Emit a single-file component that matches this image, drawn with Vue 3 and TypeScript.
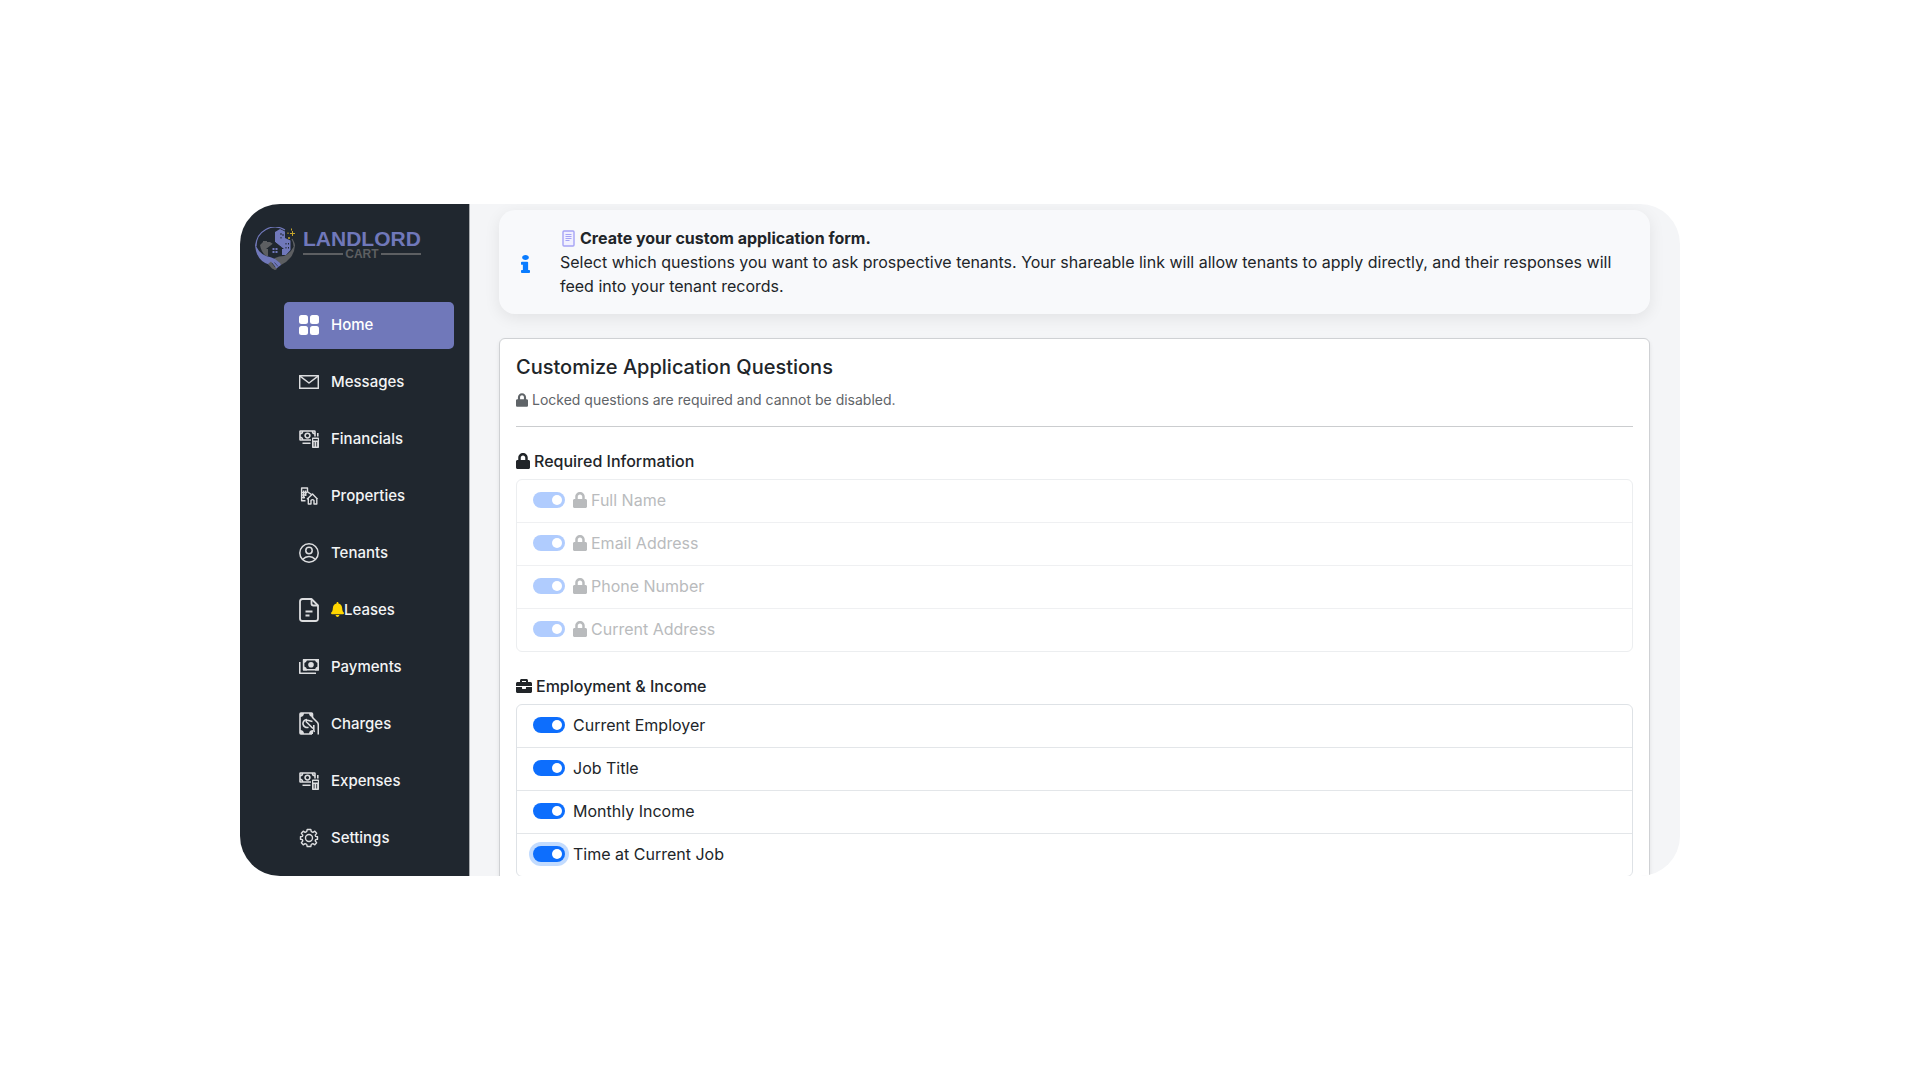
<script setup lang="ts">
import { ref } from 'vue'

interface Glyph {
  width: number
  height: number
  strokes?: string[]
  fills?: string[]
  weight?: number
}

interface NavItem {
  label: string
  icon: Glyph
  active?: boolean
  alert?: boolean
}

interface Question {
  id: string
  label: string
  enabled: boolean
  focused?: boolean
}

const money: Glyph = {
  width: 20,
  height: 18,
  weight: 1.6,
  strokes: [
    'M12 10H1.6C1.2 10 1 9.800 1 9.400V1.600C1 1.200 1.200 1 1.600 1H15.400C15.800 1 16 1.200 16 1.600V6.500',
    'M8.500 3.200A2.400 2.400 0 1 1 8.500 8A2.400 2.400 0 1 1 8.500 3.200Z',
    'M1 3.800C2.600 3.800 3.600 2.700 3.600 1M1 7.200C2.600 7.200 3.600 8.300 3.600 10M16 3.800C14.400 3.800 13.400 2.700 13.400 1',
    'M3.500 13.200H11.500M18.800 3V6.500',
  ],
  fills: [
    'M13.700 7.500H19.300Q20 7.500 20 8.200V17.300Q20 18 19.300 18H13.700Q13 18 13 17.300V8.200Q13 7.500 13.700 7.500ZM14.200 8.900V10.400H18.800V8.900ZM14.700 12V16.500H15.500V12ZM17.300 12V16.500H18.100V12Z',
  ],
}

const nav: NavItem[] = [
  {
    label: 'Home',
    active: true,
    icon: {
      width: 20,
      height: 20,
      fills: [
        'M2.500 0H6.500Q9 0 9 2.500V6.500Q9 9 6.500 9H2.500Q0 9 0 6.500V2.500Q0 0 2.500 0Z',
        'M13.500 0H17.500Q20 0 20 2.500V6.500Q20 9 17.500 9H13.500Q11 9 11 6.500V2.500Q11 0 13.500 0Z',
        'M2.500 11H6.500Q9 11 9 13.500V17.500Q9 20 6.500 20H2.500Q0 20 0 17.500V13.500Q0 11 2.500 11Z',
        'M13.500 11H17.500Q20 11 20 13.500V17.500Q20 20 17.500 20H13.500Q11 20 11 17.500V13.500Q11 11 13.500 11Z',
      ],
    },
  },
  {
    label: 'Messages',
    icon: { width: 20, height: 14, weight: 1.5, strokes: ['M.7.7H19.300V13.300H.7Z', 'M1 1.200L10 8L19 1.200'] },
  },
  { label: 'Financials', icon: money },
  {
    label: 'Properties',
    icon: {
      width: 20,
      height: 18,
      weight: 1.4,
      strokes: [
        'M6.500 13.700H2.600V1H8.500V4.800L12.500 7.500',
        'M4.700 3.500V11.500M6.700 3.500V9M3 5.500H8M3 8H7.500M3 10.500H6',
        'M8 12.300L13.500 7L18.600 12.300M9.300 11.500V17H12V13.500Q13.500 11.800 15 13.500V17H17.800V11.500',
      ],
    },
  },
  {
    label: 'Tenants',
    icon: {
      width: 20,
      height: 20,
      weight: 1.5,
      strokes: [
        'M10 .8A9.200 9.200 0 1 1 10 19.200A9.200 9.200 0 1 1 10 .8Z',
        'M10 4.300A3.200 3.200 0 1 1 10 10.700A3.200 3.200 0 1 1 10 4.300Z',
        'M3.800 16.200Q6.300 13.400 10 13.400T16.200 16.200',
      ],
    },
  },
  {
    label: 'Leases',
    alert: true,
    icon: {
      width: 20,
      height: 24,
      weight: 1.8,
      strokes: [
        'M12.500 1H3.500Q1 1 1 3.500V20.500Q1 23 3.500 23H16.500Q19 23 19 20.500V7.500Z',
        'M12.500 1V5.500Q12.500 7.500 14.500 7.500H19',
        'M6.500 13.500H13.500M6.500 17.500H10.500',
      ],
    },
  },
  {
    label: 'Payments',
    icon: {
      width: 20,
      height: 15,
      weight: 1.6,
      strokes: ['M.8 3V14.200H17', 'M4.600.8H19.200V10.700H4.600Z'],
      fills: [
        'M12 3A2.800 2.800 0 1 1 12 8.600A2.800 2.800 0 1 1 12 3Z',
        'M4 0H8Q8 4 4 4ZM20 0H16Q16 4 20 4ZM4 11.500H8Q8 7.500 4 7.500ZM20 11.500H16Q16 7.500 20 7.500Z',
      ],
    },
  },
  {
    label: 'Charges',
    icon: {
      width: 20,
      height: 23,
      weight: 1.6,
      strokes: [
        'M13 22H2Q1 22 1 21V2Q1 1 2 1H12.500Q13.500 1 13.500 2V6',
        'M8 7.500A4 4 0 1 0 9.500 15.200M13.500 5.500L18.500 10.500Q19.300 11.500 19.300 13V22.500',
        'M13.500 9.500L8.500 8.200Q6.500 8.200 7.500 10L14 16.500M14.800 13V17.500Q14.800 19 15.500 20',
      ],
      fills: [
        'M1 1H5Q5 5 1 5ZM14 1H10Q10 5 14 5ZM1 22H5Q5 18 1 18ZM14 22H10Q10 18 14 18Z',
      ],
    },
  },
  { label: 'Expenses', icon: money },
  {
    label: 'Settings',
    icon: {
      width: 20,
      height: 20,
      weight: 1.4,
      strokes: [
        'M8.200 1.500H11.800L12.300 3.700L13.900 4.400L15.800 3.200L17.600 5.300L16.200 7.200L16.700 8.400L18.500 8.800V11.200L16.700 11.600L16.200 12.800L17.600 14.700L15.800 16.800L13.900 15.600L12.300 16.300L11.800 18.500H8.200L7.700 16.300L6.100 15.600L4.200 16.800L2.400 14.700L3.800 12.800L3.300 11.600L1.500 11.200V8.800L3.300 8.400L3.800 7.200L2.400 5.300L4.200 3.200L6.100 4.400L7.700 3.700Z',
        'M10 6.500A3.500 3.500 0 1 1 10 13.500A3.500 3.500 0 1 1 10 6.500Z',
      ],
    },
  },
]

const required: Question[] = [
  { id: 'full-name', label: 'Full Name', enabled: true },
  { id: 'email', label: 'Email Address', enabled: true },
  { id: 'phone', label: 'Phone Number', enabled: true },
  { id: 'address', label: 'Current Address', enabled: true },
]

const employment = ref<Question[]>([
  { id: 'employer', label: 'Current Employer', enabled: true },
  { id: 'job-title', label: 'Job Title', enabled: true },
  { id: 'income', label: 'Monthly Income', enabled: true },
  { id: 'job-time', label: 'Time at Current Job', enabled: true, focused: true },
])

const lockPath =
  'M400 224h-24v-72C376 68.200 307.800 0 224 0S72 68.200 72 152v72H48c-26.500 0-48 21.500-48 48v192c0 26.500 21.500 48 48 48h352c26.500 0 48-21.500 48-48V272c0-26.500-21.500-48-48-48zm-104 0H152v-72c0-39.700 32.300-72 72-72s72 32.300 72 72v72z'
</script>

<template>
  <div class="page">
    <div class="frame">
      <aside class="sidebar">
        <a class="brand" href="#" aria-label="Landlord Cart">
          <svg class="brand-mark" viewBox="0 0 40 43" width="40" height="43" aria-hidden="true">
            <path d="M1 19A19 19 0 0 1 30 3" fill="none" stroke="#7078ba" stroke-width="1.200" />
            <path d="M37 12Q39 15 39.200 19" fill="none" stroke="#5d5f62" stroke-width="1.200" />
            <path d="M20 5L25 2L30 4.500V11L35.500 13.500V23L31 28H26V20L20 15Z" fill="#7078ba" />
            <path d="M26 6v2M28 7v2M26 10v1.500M31 16v1.500M33.500 16v1.500M31 20v1.500M33.500 20v1.500" stroke="#20272f" stroke-width="1" />
            <path d="M5 18L8 15V14H12V15H15L18 17L14 22V29H11Q6 25 5 18Z" fill="#5d5f62" />
            <path d="M20 15L29 22H27V30H13V22H11Z" fill="#20272f" />
            <path d="M17.500 21h2v2h-2zM20.500 21h2v2h-2zM17.500 24h2v2h-2zM20.500 24h2v2h-2z" fill="#7078ba" />
            <path d="M40 15Q40.500 24 36 30Q32 35 26 38L22 35L17 34L20 31Q24 29 29 29Q38 25 40 15Z" fill="#5d5f62" />
            <path d="M0 15Q2 25 11 29Q16 30 20 32L25 36L26 38L20 42.500L15 38Q4 35 1 24Q0 20 0 15Z" fill="#7078ba" />
            <path d="M13 37L16 34.500L22 42L20 43L17 41.500Z" fill="#5d5f62" />
            <path d="M17 36L20 40M19.500 35.500L23 39.500" stroke="#20272f" stroke-width=".6" />
            <path d="M37.500 4v5M35 6.500h5M34 10v2M33 11h2M36.500 1.500v2M33 5.500v1.500" stroke="#c5a52c" stroke-width="1" />
          </svg>
          <span class="brand-text">
            <span class="brand-name">LANDLORD</span>
            <span class="brand-sub">CART</span>
          </span>
        </a>
        <nav class="nav" aria-label="Main">
          <a v-for="item in nav" :key="item.label" href="#" class="nav-link" :class="{ active: item.active }">
            <svg
              class="nav-icon"
              :viewBox="`0 0 ${item.icon.width} ${item.icon.height}`"
              :width="item.icon.width"
              :height="item.icon.height"
              aria-hidden="true"
            >
              <path
                v-for="d in item.icon.strokes"
                :key="d"
                :d="d"
                fill="none"
                stroke="currentColor"
                stroke-linejoin="round"
                :stroke-width="item.icon.weight"
              />
              <path v-for="d in item.icon.fills" :key="d" :d="d" fill="currentColor" fill-rule="evenodd" />
            </svg>
            <svg v-if="item.alert" class="bell" viewBox="0 0 448 512" width="13" height="15" aria-hidden="true">
              <path
                fill="currentColor"
                d="M224 512c35.320 0 63.970-28.650 63.970-64H160.030c0 35.350 28.650 64 63.970 64zm215.390-149.710c-19.320-20.760-55.470-51.990-55.470-154.290 0-77.700-54.480-139.900-127.940-155.160V32c0-17.670-14.320-32-31.980-32s-31.980 14.330-31.980 32v20.840C118.560 68.100 64.080 130.300 64.080 208c0 102.300-36.150 133.530-55.470 154.290-6 6.450-8.660 14.160-8.610 21.710.11 16.400 12.980 32 32.100 32h383.800c19.120 0 32-15.600 32.100-32 .05-7.550-2.610-15.270-8.610-21.710z"
              />
            </svg>
            <span>{{ item.label }}</span>
          </a>
        </nav>
      </aside>

      <main class="content">
        <section class="notice">
          <svg class="info" viewBox="0 0 192 512" width="9" height="18" preserveAspectRatio="none" aria-hidden="true">
            <path
              fill="currentColor"
              d="M20 424.229h20V279.771H20c-11.046 0-20-8.954-20-20V212c0-11.046 8.954-20 20-20h112c11.046 0 20 8.954 20 20v212.229h20c11.046 0 20 8.954 20 20V492c0 11.046-8.954 20-20 20H20c-11.046 0-20-8.954-20-20v-47.771c0-11.046 8.954-20 20-20zM96 0C56.235 0 24 32.235 24 72s32.235 72 72 72 72-32.235 72-72S135.764 0 96 0z"
            />
          </svg>
          <div>
            <div class="notice-title">
              <svg viewBox="0 0 13 17" width="13" height="17" aria-hidden="true">
                <rect x="1" y="1" width="11" height="15" rx="1" fill="#f1f0ff" stroke="#a5a3f5" stroke-width="1.400" />
                <path d="M3.500 4.500h6M3.500 6.500h6M3.500 8.500h6M3.500 10.500h4" stroke="#a5a3f5" stroke-width="1.200" />
              </svg>
              <strong>Create your custom application form.</strong>
            </div>
            <p class="notice-text">
              Select which questions you want to ask prospective tenants. Your shareable link will allow tenants to
              apply directly, and their responses will feed into your tenant records.
            </p>
          </div>
        </section>

        <section class="card">
          <h1 class="card-title">Customize Application Questions</h1>
          <p class="hint">
            <svg viewBox="0 0 448 512" width="12" height="14" aria-hidden="true"><path fill="currentColor" :d="lockPath" /></svg>
            Locked questions are required and cannot be disabled.
          </p>
          <hr class="rule" />

          <h2 class="group-title">
            <svg viewBox="0 0 448 512" width="14" height="16" aria-hidden="true"><path fill="currentColor" :d="lockPath" /></svg>
            Required Information
          </h2>
          <ul class="list locked">
            <li v-for="q in required" :key="q.id" class="row">
              <input :id="q.id" class="switch" type="checkbox" role="switch" :checked="q.enabled" disabled />
              <label :for="q.id" class="row-label">
                <svg viewBox="0 0 448 512" width="14" height="16" aria-hidden="true"><path fill="currentColor" :d="lockPath" /></svg>
                {{ q.label }}
              </label>
            </li>
          </ul>

          <h2 class="group-title">
            <svg viewBox="0 0 512 512" width="16" height="16" aria-hidden="true">
              <path
                fill="currentColor"
                d="M320 336c0 8.840-7.160 16-16 16h-96c-8.840 0-16-7.160-16-16v-48H0v144c0 25.600 22.400 48 48 48h416c25.600 0 48-22.400 48-48V288H320v48zm144-208h-80V80c0-25.600-22.400-48-48-48H176c-25.600 0-48 22.400-48 48v48H48c-25.600 0-48 22.400-48 48v80h512v-80c0-25.600-22.400-48-48-48zm-144 0H192V96h128v32z"
              />
            </svg>
            Employment &amp; Income
          </h2>
          <ul class="list">
            <li v-for="q in employment" :key="q.id" class="row">
              <input
                :id="q.id"
                v-model="q.enabled"
                class="switch"
                :class="{ focused: q.focused }"
                type="checkbox"
                role="switch"
              />
              <label :for="q.id" class="row-label">{{ q.label }}</label>
            </li>
          </ul>
        </section>
      </main>
    </div>
  </div>
</template>

<style>
body {
  margin: 0;
  background: #fff;
}
</style>

<style scoped>
.page {
  display: flex;
  align-items: center;
  justify-content: center;
  min-height: 100vh;
  font-family: Inter, "Liberation Sans", sans-serif;
  font-size: 16px;
  line-height: 24px;
  color: #212529;
}

.page * {
  box-sizing: border-box;
}

.frame {
  display: flex;
  width: 75%;
  aspect-ratio: 15 / 7;
  overflow: hidden;
  border-radius: 40px;
  background: #f4f5f7;
}

.sidebar {
  flex: none;
  width: 230px;
  height: 100%;
  overflow: hidden;
  padding: 23px 15px 0;
  border-right: 1px solid #a9acb0;
  background: #20272f;
}

.brand {
  display: flex;
  gap: 8px;
  text-decoration: none;
  font-family: "Liberation Sans", Arial, sans-serif;
}

.brand-mark {
  flex: none;
}

.brand-text {
  display: flex;
  flex-direction: column;
  padding-top: 3px;
}

.brand-name {
  font-size: 21px;
  line-height: 18px;
  font-weight: 700;
  color: #7078ba;
}

.brand-sub {
  display: flex;
  align-items: center;
  gap: 2px;
  font-size: 12px;
  line-height: 12px;
  font-weight: 700;
  color: #5d5f62;
}

.brand-sub::before,
.brand-sub::after {
  content: "";
  flex: 1;
  height: 2px;
  background: #5d5f62;
}

.nav {
  display: flex;
  flex-direction: column;
  gap: 10px;
  margin: 32px 0 0 29px;
}

.nav-link {
  display: flex;
  align-items: center;
  height: 47px;
  flex: none;
  padding: 0 15px 2px;
  border-radius: 5px;
  font-size: 15px;
  font-weight: 500;
  color: #f3f4f5;
  text-decoration: none;
}

.nav-link.active {
  background: #7078ba;
  color: #fff;
}

.nav-icon {
  flex: none;
  margin-right: 12px;
  color: #dcdddf;
}

.active .nav-icon {
  color: #fff;
}

.bell {
  flex: none;
  color: #ffd600;
}

.content {
  flex: 1;
  min-width: 0;
  height: 100%;
  overflow: hidden;
  padding: 6px 30px 0 29px;
}

.notice {
  display: flex;
  align-items: center;
  gap: 30px;
  padding: 16px 24px 16px 22px;
  border-radius: 16px;
  background: #f8f9fb;
  box-shadow: 0 4px 16px rgba(0, 0, 0, 0.08);
}

.info {
  flex: none;
  margin-top: 4px;
  color: #0a7cff;
}

.notice-title {
  display: flex;
  align-items: center;
  gap: 5px;
  padding-left: 2px;
}

.notice-text {
  margin: 0;
}

.card {
  margin-top: 24px;
  padding: 16px;
  border: 1px solid #cfd1d4;
  border-radius: 6px;
  background: #fff;
  box-shadow: 0 2px 4px rgba(0, 0, 0, 0.08);
}

.card-title {
  margin: 0;
  font-size: 20px;
  line-height: 24px;
  font-weight: 500;
}

.hint {
  display: flex;
  align-items: center;
  gap: 4px;
  margin: 10px 0 16px;
  font-size: 14px;
  line-height: 21px;
  color: #5f6468;
}

.rule {
  margin: 0;
  border: 0;
  border-top: 1px solid #cbcdcf;
}

.group-title {
  display: flex;
  align-items: center;
  gap: 4px;
  margin: 24px 0 8px;
  font-size: 16px;
  line-height: 20px;
  font-weight: 500;
}

.list {
  margin: 0;
  padding: 0;
  overflow: hidden;
  list-style: none;
  border: 1px solid #dee2e6;
  border-radius: 6px;
}

.list.locked {
  border-color: #eceef0;
}

.row {
  display: flex;
  align-items: center;
  gap: 8px;
  height: 43px;
  padding: 0 16px 3px;
}

.row:first-child {
  height: 42px;
}

.row + .row {
  border-top: 1px solid #e3e6e9;
}

.locked .row + .row {
  border-color: #eff0f2;
}

.row-label {
  display: flex;
  align-items: center;
  gap: 4px;
}

.locked .row-label {
  color: #b9bbbd;
}

.switch {
  display: flex;
  align-items: center;
  justify-content: flex-end;
  appearance: none;
  width: 32px;
  height: 16px;
  margin: 0;
  padding: 0 3px;
  border-radius: 8px;
  background: #adb5bd;
}

.switch::before {
  content: "";
  width: 10px;
  height: 10px;
  border-radius: 50%;
  background: #fff;
}

.switch:checked {
  background: #0d6efd;
}

.switch:not(:checked) {
  justify-content: flex-start;
}

.switch:disabled {
  background: #b0ccfe;
}

.switch.focused {
  box-shadow: 0 0 0 4px rgba(13, 110, 253, 0.25);
}
</style>
